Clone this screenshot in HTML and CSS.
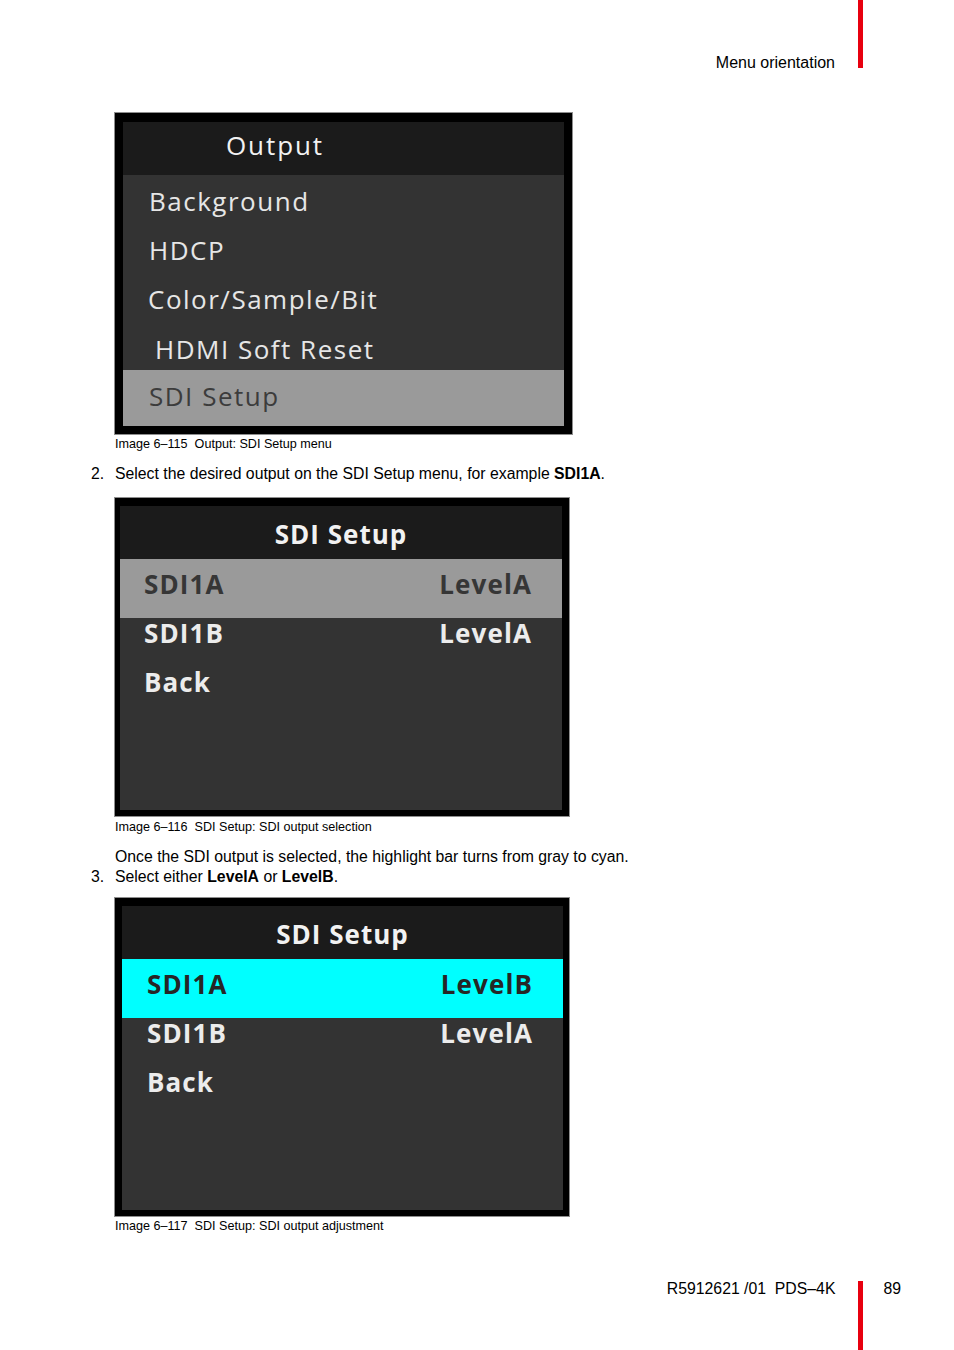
FILE: index.html
```html
<!DOCTYPE html>
<html lang="en">
<head>
<meta charset="utf-8">
<title>Menu orientation</title>
<link rel="stylesheet" href="styles.css">
</head>
<body>
<div class="page">
  <header class="running-head">
    <span class="running-title">Menu orientation</span>
    <span class="red-bar head-bar"></span>
  </header>

  <main class="content">
    <figure class="fig fig-output">
      <div class="osd osd-output">
        <div class="osd-head out-head">Output</div>
        <div class="osd-body out-body">
          <div class="out-row r1">Background</div>
          <div class="out-row r2">HDCP</div>
          <div class="out-row r3">Color/Sample/Bit</div>
          <div class="out-row r4">HDMI Soft Reset</div>
          <div class="out-row out-hl">SDI Setup</div>
        </div>
      </div>
      <figcaption class="caption caption-1">Image 6–115  Output: SDI Setup menu</figcaption>
    </figure>

    <div class="step step-2"><span class="step-num">2.</span><span>Select the desired output on the SDI Setup menu, for example <b>SDI1A</b>.</span></div>

    <figure class="fig fig-sdi fig-sdi-1">
      <div class="osd osd-sdi osd-sdi-1">
        <div class="osd-head sdi-head">SDI Setup</div>
        <div class="osd-body sdi-body">
          <div class="sdi-row hl-gray"><span>SDI1A</span><span>LevelA</span></div>
          <div class="sdi-row"><span>SDI1B</span><span>LevelA</span></div>
          <div class="sdi-row"><span>Back</span></div>
        </div>
      </div>
      <figcaption class="caption caption-2">Image 6–116  SDI Setup: SDI output selection</figcaption>
    </figure>

    <p class="para">Once the SDI output is selected, the highlight bar turns from gray to cyan.</p>
    <div class="step step-3"><span class="step-num">3.</span><span>Select either <b>LevelA</b> or <b>LevelB</b>.</span></div>

    <figure class="fig fig-sdi fig-sdi-2">
      <div class="osd osd-sdi osd-sdi-2">
        <div class="osd-head sdi-head">SDI Setup</div>
        <div class="osd-body sdi-body">
          <div class="sdi-row hl-cyan"><span>SDI1A</span><span>LevelB</span></div>
          <div class="sdi-row"><span>SDI1B</span><span>LevelA</span></div>
          <div class="sdi-row"><span>Back</span></div>
        </div>
      </div>
      <figcaption class="caption caption-3">Image 6–117  SDI Setup: SDI output adjustment</figcaption>
    </figure>
  </main>

  <footer class="running-foot">
    <span class="foot-doc">R5912621 /01  PDS–4K</span>
    <span class="red-bar foot-bar"></span>
    <span class="foot-page">89</span>
  </footer>
</div>
</body>
</html>
```

FILE: styles.css
```css
html, body {
  margin: 0;
  padding: 0;
  background: #ffffff;
}

.page {
  width: 954px;
  height: 1350px;
  display: flex;
  flex-direction: column;
  font-family: "Liberation Sans", Arial, sans-serif;
  color: #000;
  overflow: hidden;
}

/* running head */
.running-head {
  display: flex;
  justify-content: flex-end;
  align-items: flex-start;
  height: 68px;
  padding-right: 91px;
  flex: none;
}
.running-title {
  margin-top: 54px;
  font-size: 16px;
  line-height: 18px;
  margin-right: 23px;
}
.red-bar {
  display: block;
  width: 5px;
  background: #e8000f;
}
.head-bar {
  height: 68px;
}

/* content */
.content {
  padding-left: 91px;
  padding-top: 45px;
  flex: none;
}
.fig {
  margin: 0 0 0 24px;
}
.caption {
  font-size: 12.6px;
  line-height: 14px;
  white-space: pre;
}
.caption-1 { margin-top: 3px; }
.caption-2 { margin-top: 4px; }
.caption-3 { margin-top: 3px; }

.step {
  display: flex;
  font-size: 15.8px;
  line-height: 20px;
}
.step-num {
  width: 24px;
  flex: none;
}
.step-2 { margin-top: 13px; }
.para {
  margin: 13px 0 0 24px;
  font-size: 15.8px;
  line-height: 20px;
}

/* OSD frames */
.osd {
  background: #000;
  border-style: solid;
  border-color: #000;
  outline: 1px solid #8e8e8e;
  font-family: "Open Sans", "Noto Sans", sans-serif;
}
.osd-head {
  background: #1b1b1b;
  height: 53px;
  box-sizing: border-box;
  color: #f2f2f2;
}
.osd-body {
  background: #333333;
}

/* Output menu */
.fig-output { margin-top: 0; }
.osd-output {
  width: 441px;
  border-width: 9px 8px 8px 8px;
}
.out-head {
  font-size: 26px;
  line-height: 46px;
  padding-left: 103px;
  padding-bottom: 7px;
  letter-spacing: 1.9px;
}
.out-body {
  height: 251px;
  padding-top: 1px;
  box-sizing: border-box;
  font-size: 26px;
  color: #e6e6e6;
  letter-spacing: 1.5px;
}
.out-row {
  padding-left: 26px;
  line-height: 49px;
}
.out-row.r1 { line-height: 50px; }
.out-row.r2 { line-height: 48px; }
.out-row.r3 { line-height: 50px; padding-left: 25px; }
.out-row.r4 { line-height: 42px; padding-top: 4px; padding-left: 32px; }
.out-row.out-hl {
  background: #9a9a9a;
  color: #3c3c3c;
  line-height: 52px;
  padding-bottom: 4px;
}

/* SDI setup menu */
.fig-sdi-1 { margin-top: 14px; }
.fig-sdi-2 { margin-top: 11px; }
.osd-sdi-1 {
  width: 442px;
  border-width: 8px 7px 6px 5px;
}
.osd-sdi-2 {
  width: 441px;
  border-width: 8px 6px 6px 7px;
}
.sdi-head {
  font-size: 26px;
  font-weight: 700;
  line-height: 49px;
  padding-top: 4px;
  text-align: center;
  letter-spacing: 1px;
}
.sdi-body {
  height: 251px;
  font-size: 26px;
  font-weight: 700;
  color: #ececec;
  letter-spacing: 1.1px;
}
.sdi-row {
  display: flex;
  justify-content: space-between;
  padding: 0 30px 0 24px;
  line-height: 49px;
}
.sdi-row.hl-gray,
.sdi-row.hl-cyan {
  line-height: 50px;
}
.sdi-row.hl-gray {
  background: #9a9a9a;
  box-shadow: 0 9px 0 #9a9a9a;
  color: #363636;
}
.sdi-row.hl-cyan {
  background: #00ffff;
  box-shadow: 0 9px 0 #00ffff;
  color: #262626;
}
.osd-sdi-2 .sdi-row { padding-left: 25px; }

/* running foot */
.running-foot {
  margin-top: auto;
  display: flex;
  justify-content: flex-end;
  align-items: flex-start;
  height: 71px;
  padding-right: 53px;
  flex: none;
  font-size: 15.8px;
  line-height: 18px;
}
.foot-doc {
  white-space: pre;
  margin-right: 23px;
  margin-top: 1px;
}
.foot-page {
  margin-top: 1px;
}
.foot-bar {
  margin-top: 2px;
  height: 69px;
  margin-right: 20px;
}
```
